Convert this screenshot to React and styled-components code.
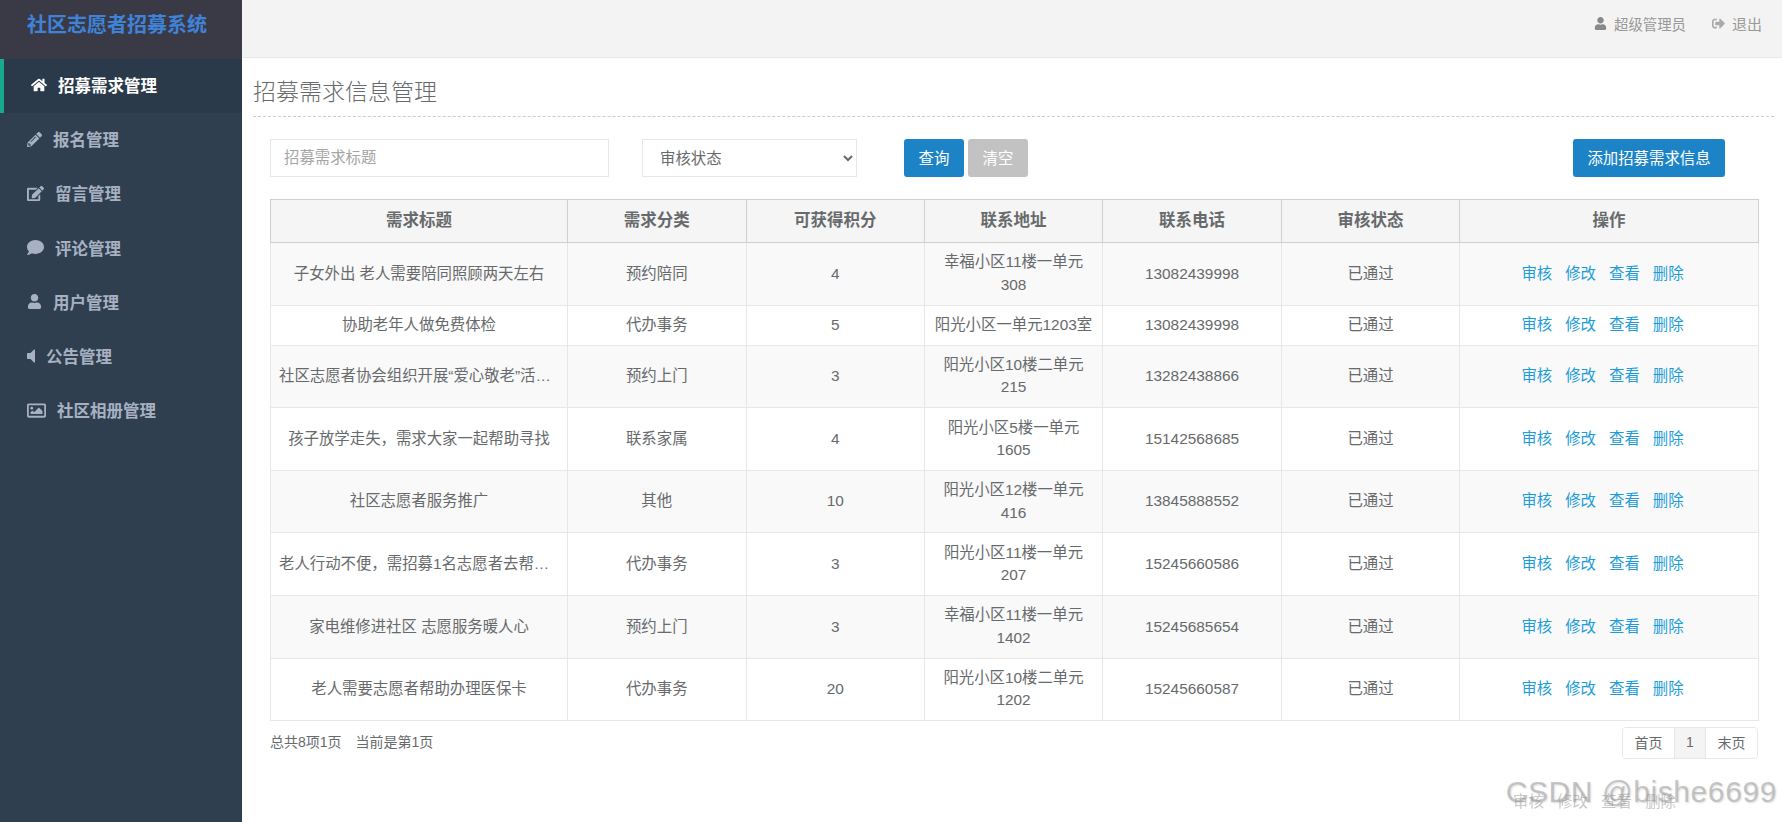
import React from "react";
import styled, { createGlobalStyle } from "styled-components";
import { FaHome, FaPencilAlt, FaEdit, FaComment, FaUser, FaRegImage, FaSignOutAlt } from "react-icons/fa";

const Global = createGlobalStyle`
  html, body { margin: 0; padding: 0; height: 100%; overflow: hidden; background: #fff; }
  * { box-sizing: border-box; }
  body { font-family: "Liberation Sans", "Noto Sans CJK SC", sans-serif; font-size: 15.4px; color: #676a6c; }
`;

const Page = styled.div`display: flex; height: 822px; width: 1782px; position: relative; overflow: hidden;`;
const Sidebar = styled.aside`width: 242px; flex: none; background: #2f3f50;`;
const Brand = styled.div`
  height: 59px; padding: 12px 0 0 27px; background: #3a3a47;
  font-size: 20px; font-weight: 700; line-height: 26px; color: #3f83d9;
`;
const NavItem = styled.div`
  height: 54.2px; display: flex; align-items: center; gap: 11px; padding-bottom: 2px; padding-left: 27px;
  border-left: ${p => (p.$active ? "4px solid #19aa8d" : "none")};
  background: ${p => (p.$active ? "#2a3a4a" : "transparent")};
  color: ${p => (p.$active ? "#fff" : "#a7b1c2")};
  font-size: 16.5px; font-weight: 700;
  svg { height: ${p => p.$icon}px; width: auto; flex: none; }
`;
const Main = styled.main`flex: 1; min-width: 0; display: flex; flex-direction: column;`;
const Header = styled.header`
  height: 58px; flex: none; background: #f3f3f3; border-bottom: 1px solid #e7e7e7;
  display: flex; justify-content: flex-end; align-items: center; gap: 26px;
  padding: 0 20px 11px 0; font-size: 14.4px; color: #999;
`;
const HeaderLink = styled.span`
  display: flex; align-items: center; gap: 7px;
  svg { font-size: 13px; color: ${p => (p.$dark ? "#888" : "#aaa")}; }
`;
const ExitLink = styled(HeaderLink)`font-size: 15px;`;
const Content = styled.div`padding: 0 8px 0 11px;`;
const TitleBar = styled.div`height: 59px; border-bottom: 1px dashed #ccc; padding-top: 18px;`;
const Title = styled.h3`margin: 0; font-size: 23px; line-height: 32px; font-weight: 300; color: #676a6c;`;
const Panel = styled.div`padding: 22px 16px 0 17px;`;
const Toolbar = styled.div`display: flex; align-items: center; height: 38px; margin-bottom: 22px;`;
const SearchInput = styled.input`
  width: 339px; height: 38px; border: 1px solid #e5e6e7; padding: 0 13px 1px; margin-right: 33px;
  font: inherit; color: #676a6c; outline: none;
  &::placeholder { color: #a5a5a5; opacity: 1; }
`;
const StatusSelect = styled.select`
  width: 215px; height: 38px; border: 1px solid #e5e6e7; background: #fff; padding: 0 13px; margin-right: 47px;
  font: inherit; color: #676a6c; outline: none;
`;
const Button = styled.button`
  height: 38px; border: none; border-radius: 3px; padding: 0 0 2px; width: 60px;
  font: inherit; color: #fff; background: ${p => (p.$muted ? "#c2c2c2" : "#1c84c6")};
  margin-right: 4px; white-space: nowrap;
`;
const Spacer = styled.div`flex: 1;`;
const AddButton = styled(Button)`margin-right: 33px; width: 152px;`;
const Table = styled.table`
  width: 1488px; table-layout: fixed; border-collapse: collapse; text-align: center;
`;
const Th = styled.th`
  height: 43px; padding: 0 8px 4px; background: #f5f5f5; border: 1px solid #cfcfcf;
  font-size: 16.5px; font-weight: 700; color: #676a6c;
`;
const Row = styled.tr`background: ${p => (p.$odd ? "#f9f9f9" : "#fff")};`;
const Td = styled.td`padding: 8.3px 8px; border: 1px solid #e7e7e7; line-height: 22.5px;`;
const TitleCell = styled(Td)`overflow: hidden; white-space: nowrap; text-overflow: ellipsis;`;
const ActionLink = styled.a`color: #1c9dd9; text-decoration: none; margin-right: 13px;`;
const Footer = styled.div`display: flex; justify-content: space-between; align-items: center; margin-top: 6px; font-size: 14px;`;
const Summary = styled.span`padding-bottom: 4px;`;
const Pager = styled.div`display: flex; height: 32px; border: 1px solid #e7e7e7; border-radius: 4px; overflow: hidden;`;
const PageItem = styled.span`
  width: ${p => p.$w}px; display: flex; align-items: center; justify-content: center; padding-bottom: 2px;
  background: ${p => (p.$active ? "#f4f4f4" : "#fff")};
  & + & { border-left: 1px solid #e7e7e7; }
`;
const Watermark = styled.div`
  position: absolute; right: 5px; top: 775px; font-size: 30px; line-height: 34px; letter-spacing: 0.6px;
  color: rgba(160,160,160,.55); text-shadow: 1px 1px 2px rgba(0,0,0,.15); white-space: nowrap;
`;
const GhostLinks = styled.div`
  position: absolute; left: 1513px; top: 791px; font-size: 15.4px; line-height: 22px; word-spacing: 9px;
  color: rgba(110,110,110,.4); white-space: nowrap;
`;

const SpeakerIcon = () => (
  <svg viewBox="0 0 8 14" fill="currentColor" aria-hidden="true">
    <path d="M8 1v12c0 .6-.7.8-1 .4L3.500 10H.7C.3 10 0 9.700 0 9.300V4.700C0 4.300.3 4 .7 4h2.800L7 .6C7.300.2 8 .4 8 1z" />
  </svg>
);

const nav = [
  [FaHome, "招募需求管理", 16], [FaPencilAlt, "报名管理", 15], [FaEdit, "留言管理", 17], [FaComment, "评论管理", 17],
  [FaUser, "用户管理", 15], [SpeakerIcon, "公告管理", 14], [FaRegImage, "社区相册管理", 19],
];
const cols = [297, 178.5, 178.5, 178, 179, 178, 299];
const heads = ["需求标题", "需求分类", "可获得积分", "联系地址", "联系电话", "审核状态", "操作"];
const rows = [
  ["子女外出 老人需要陪同照顾两天左右", "预约陪同", "4", "幸福小区11楼一单元308", "13082439998"],
  ["协助老年人做免费体检", "代办事务", "5", "阳光小区一单元1203室", "13082439998"],
  ["社区志愿者协会组织开展“爱心敬老”活动倡议", "预约上门", "3", "阳光小区10楼二单元215", "13282438866"],
  ["孩子放学走失，需求大家一起帮助寻找", "联系家属", "4", "阳光小区5楼一单元1605", "15142568685"],
  ["社区志愿者服务推广", "其他", "10", "阳光小区12楼一单元416", "13845888552"],
  ["老人行动不便，需招募1名志愿者去帮助老人出行", "代办事务", "3", "阳光小区11楼一单元207", "15245660586"],
  ["家电维修进社区 志愿服务暖人心", "预约上门", "3", "幸福小区11楼一单元1402", "15245685654"],
  ["老人需要志愿者帮助办理医保卡", "代办事务", "20", "阳光小区10楼二单元1202", "15245660587"],
];

export default function App() {
  return (
    <Page>
      <Global />
      <Sidebar>
        <Brand>社区志愿者招募系统</Brand>
        {nav.map(([Icon, label, size], i) => (
          <NavItem key={label} $active={i === 0} $icon={size}><Icon />{label}</NavItem>
        ))}
      </Sidebar>
      <Main>
        <Header>
          <HeaderLink $dark><FaUser />超级管理员</HeaderLink>
          <ExitLink><FaSignOutAlt />退出</ExitLink>
        </Header>
        <Content>
          <TitleBar><Title>招募需求信息管理</Title></TitleBar>
          <Panel>
            <Toolbar>
              <SearchInput placeholder="招募需求标题" />
              <StatusSelect defaultValue=""><option value="">审核状态</option></StatusSelect>
              <Button>查询</Button>
              <Button $muted>清空</Button>
              <Spacer />
              <AddButton>添加招募需求信息</AddButton>
            </Toolbar>
            <Table>
              <colgroup>{cols.map((w, i) => <col key={i} width={w} />)}</colgroup>
              <thead><tr>{heads.map(h => <Th key={h}>{h}</Th>)}</tr></thead>
              <tbody>
                {rows.map((r, i) => (
                  <Row key={r[0]} $odd={i % 2 === 0}>
                    <TitleCell>{r[0]}</TitleCell>
                    <Td>{r[1]}</Td>
                    <Td>{r[2]}</Td>
                    <Td>{r[3]}</Td>
                    <Td>{r[4]}</Td>
                    <Td>已通过</Td>
                    <Td>
                      {["审核", "修改", "查看", "删除"].map(a => <ActionLink key={a}>{a}</ActionLink>)}
                    </Td>
                  </Row>
                ))}
              </tbody>
            </Table>
            <Footer>
              <Summary>总共8项1页　当前是第1页</Summary>
              <Pager>
                <PageItem $w={51}>首页</PageItem>
                <PageItem $w={31} $active>1</PageItem>
                <PageItem $w={52}>末页</PageItem>
              </Pager>
            </Footer>
          </Panel>
        </Content>
      </Main>
      <GhostLinks>审核 修改 查看 删除</GhostLinks>
      <Watermark>CSDN @bishe6699</Watermark>
    </Page>
  );
}
